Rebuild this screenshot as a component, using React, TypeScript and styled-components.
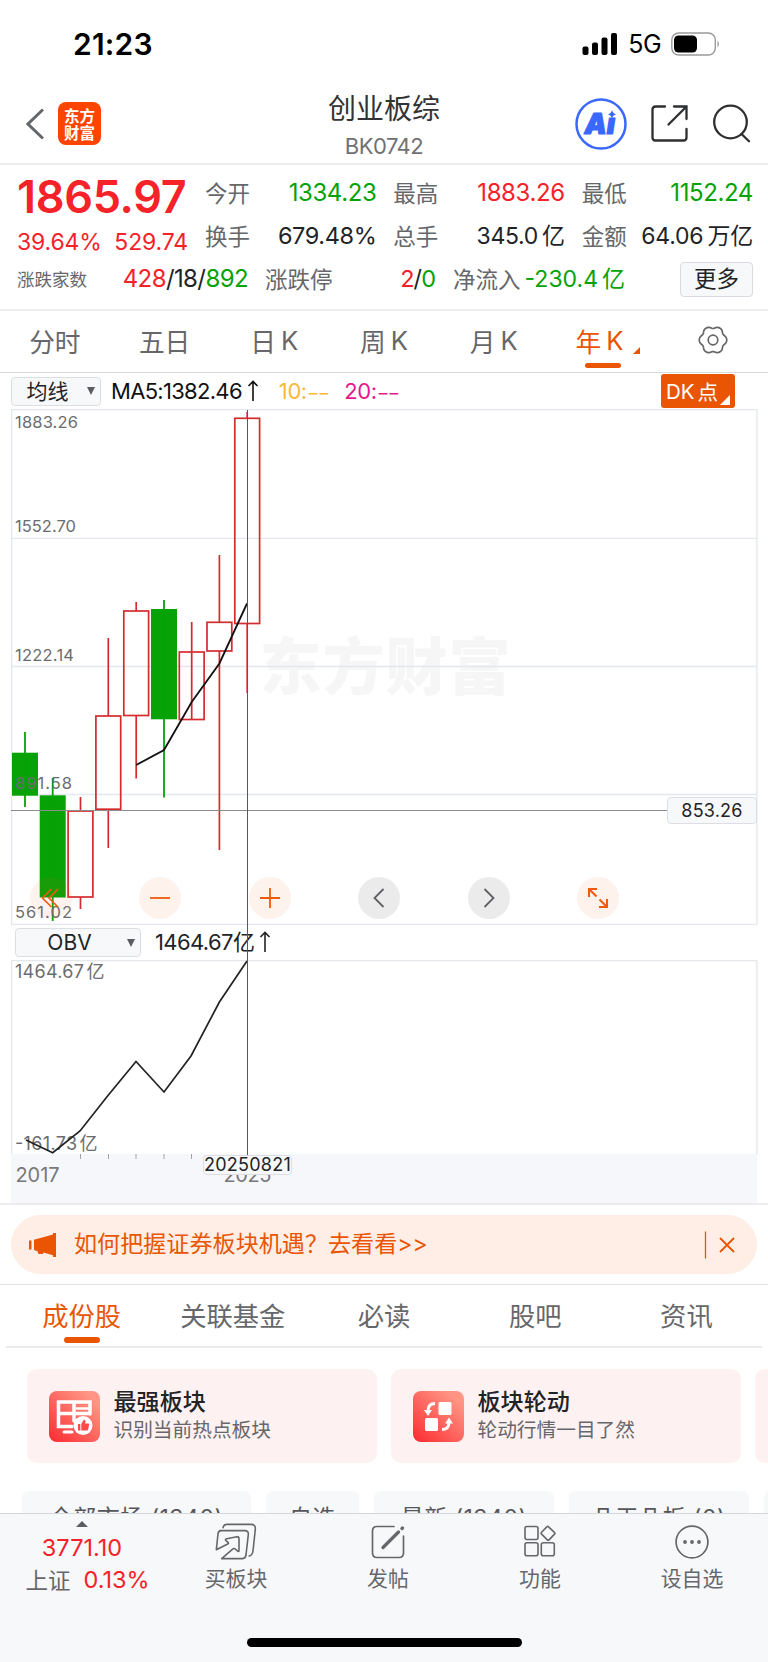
import React from "react";
import styled, { createGlobalStyle } from "styled-components";

const c = {
  red: "#f5222a",
  green: "#06a206",
  ink: "#222326",
  grey: "#66676a",
  orange: "#ea5504",
  line: "#e3e4e8",
  panel: "#f7f8fa",
};

const fontStack = `Inter, "Noto Sans CJK SC", sans-serif`;

const GlobalStyle = createGlobalStyle`
  * { box-sizing: border-box; }
  body { margin: 0; background: #fff; font-family: ${fontStack}; color: ${c.ink}; }
  svg { display: block; flex: none; }
`;

const Screen = styled.div`
  width: 768px;
  height: 1662px;
  display: flex;
  flex-direction: column;
  overflow: hidden;
  background: #fff;
`;

const Label = styled.span<{ $size?: number; $color?: string; $ls?: number; $weight?: number }>`
  font-size: ${(p) => p.$size ?? 22}px;
  color: ${(p) => p.$color ?? c.grey};
  letter-spacing: ${(p) => p.$ls ?? 0}px;
  font-weight: ${(p) => p.$weight ?? 400};
  line-height: 1.2;
  white-space: nowrap;
`;

const Unit = styled.span`
  margin-left: 4px;
`;

const Dashes = styled.span`
  font-size: 17.5px;
  letter-spacing: 2px;
  margin-left: 2px;
`;

/* status bar */
const StatusBar = styled.header`
  height: 84px;
  flex: none;
  display: flex;
  justify-content: space-between;
  align-items: center;
  padding: 4px 48px 0 73px;
`;
const StatusRight = styled.div`
  display: flex;
  align-items: center;
  gap: 10px;
`;

/* title bar */
const TitleBar = styled.div`
  height: 81px;
  flex: none;
  display: grid;
  grid-template-columns: 1fr auto 1fr;
  align-items: center;
  padding: 0 17px;
  border-bottom: 2px solid #ececee;
`;
const TitleLeft = styled.div`
  display: flex;
  align-items: center;
  gap: 14px;
  margin-left: 9px;
`;
const Logo = styled.div`
  width: 43px;
  height: 43px;
  border-radius: 8px;
  background: #ff4400;
  color: #fff;
  font: 700 15.5px/17px "Noto Sans CJK SC", sans-serif;
  display: flex;
  align-items: center;
  text-align: center;
  padding: 0 5px;
`;
const TitleText = styled.div`
  display: flex;
  flex-direction: column;
  align-items: center;
  gap: 7px;
  padding-top: 5px;
`;
const TitleRight = styled.div`
  display: flex;
  align-items: center;
  justify-content: flex-end;
  gap: 24px;
`;

/* quote panel */
const Quote = styled.section`
  height: 146px;
  flex: none;
  display: flex;
  flex-direction: column;
  border-bottom: 2px solid #eeeef0;
  padding: 6px 15px 0 17px;
`;
const QuoteTop = styled.div`
  height: 87px;
  flex: none;
  display: grid;
  grid-template-columns: 171px 1fr;
  column-gap: 17px;
`;
const PriceBlock = styled.div`
  display: flex;
  flex-direction: column;
`;
const Price = styled.div`
  height: 51px;
  flex: none;
  display: flex;
  align-items: center;
  font-size: 45px;
  font-weight: 600;
  letter-spacing: -0.3px;
  color: ${c.red};
`;
const Change = styled.div`
  height: 42px;
  flex: none;
  display: flex;
  justify-content: space-between;
  align-items: center;
`;
const Stats = styled.div`
  display: grid;
  grid-template-columns: repeat(3, 1fr);
  grid-auto-rows: 43px;
  column-gap: 17px;
  padding-top: 1px;
`;
const Stat = styled.div`
  display: flex;
  justify-content: space-between;
  align-items: center;
`;
const QuoteBottom = styled.div`
  height: 43px;
  flex: none;
  display: flex;
  align-items: center;
`;
const BottomCell = styled.div<{ $w: number; $gap?: number }>`
  width: ${(p) => p.$w}px;
  margin-right: ${(p) => p.$gap ?? 17}px;
  display: flex;
  justify-content: space-between;
  align-items: center;
`;
const MoreButton = styled.button`
  margin-left: auto;
  width: 73px;
  height: 35px;
  padding: 0;
  border: 1px solid #d9dbe2;
  border-radius: 4px;
  background: ${c.panel};
  font: 400 22.5px/1 ${fontStack};
  color: ${c.ink};
`;

/* period tabs */
const PeriodTabs = styled.nav`
  height: 62px;
  flex: none;
  display: grid;
  grid-template-columns: repeat(7, 1fr);
  border-bottom: 1px solid #d8dade;
`;
const PeriodTab = styled.div<{ $active?: boolean }>`
  position: relative;
  display: flex;
  align-items: center;
  justify-content: center;
  gap: 5px;
  padding: 0 ${(p) => (p.$active ? 8 : 0)}px 3px 0;
  font-size: 25.7px;
  color: ${(p) => (p.$active ? c.orange : c.grey)};
`;
const Underline = styled.i<{ $bottom: number }>`
  position: absolute;
  left: calc(50% - 18px);
  bottom: ${(p) => p.$bottom}px;
  width: 36px;
  height: 5.5px;
  border-radius: 3px;
  background: ${c.orange};
`;
const Corner = styled.i<{ $size: number; $color: string; $right: number; $bottom: number }>`
  position: absolute;
  right: ${(p) => p.$right}px;
  bottom: ${(p) => p.$bottom}px;
  border-left: ${(p) => p.$size}px solid transparent;
  border-bottom: ${(p) => p.$size}px solid ${(p) => p.$color};
`;

/* charts */
const ChartArea = styled.section`
  position: relative;
  height: 830px;
  flex: none;
  display: flex;
  flex-direction: column;
`;
const IndicatorBar = styled.div<{ $h: number; $pad: number }>`
  height: ${(p) => p.$h}px;
  flex: none;
  display: flex;
  align-items: center;
  padding: 0 33px 0 ${(p) => p.$pad}px;
`;
const Select = styled.div<{ $w: number }>`
  width: ${(p) => p.$w}px;
  height: 29px;
  display: flex;
  align-items: center;
  border: 1px solid #dcdee4;
  border-radius: 4px;
  background: ${c.panel};
  padding-right: 5px;
`;
const SelectText = styled.span`
  flex: 1;
  text-align: center;
  font-size: 21px;
  line-height: 1;
  padding-right: 4px;
`;
const Caret = styled.i`
  border: 4.5px solid transparent;
  border-top: 8px solid #5c5d60;
  border-bottom: 0;
`;
const MaValues = styled.div<{ $gap: number; $left: number }>`
  display: flex;
  align-items: center;
  gap: ${(p) => p.$gap}px;
  margin-left: ${(p) => p.$left}px;
`;
const DkButton = styled.div`
  position: relative;
  margin-left: auto;
  width: 74px;
  height: 34px;
  border-radius: 3px;
  background: ${c.orange};
  display: flex;
  align-items: center;
  gap: 3px;
  padding-left: 5px;
  color: #fff;
  font-size: 20.5px;
`;
const ChartFrame = styled.div<{ $h: number }>`
  position: relative;
  height: ${(p) => p.$h}px;
  flex: none;
  padding: 0 11px;
`;
const PriceTag = styled.div`
  position: absolute;
  right: 11px;
  top: 388px;
  width: 90px;
  height: 27px;
  border: 1px solid #dcdee3;
  border-radius: 4px;
  background: ${c.panel};
  display: flex;
  align-items: center;
  justify-content: center;
  font-size: 18px;
  letter-spacing: 0.2px;
`;
const Controls = styled.div`
  position: absolute;
  left: 30px;
  bottom: 6px;
  width: 589px;
  display: flex;
  justify-content: space-between;
`;
const RoundButton = styled.div<{ $grey?: boolean }>`
  width: 42px;
  height: 42px;
  border-radius: 50%;
  background: ${(p) => (p.$grey ? "rgba(60,60,60,.1)" : "rgba(245,90,20,.08)")};
  color: ${(p) => (p.$grey ? "#5f6063" : "#f05a0c")};
  display: flex;
  align-items: center;
  justify-content: center;
`;
const Crosshair = styled.i`
  position: absolute;
  left: 247px;
  top: 37px;
  width: 1px;
  height: 745px;
  background: #58585a;
`;
const Axis = styled.div`
  position: relative;
  height: 49px;
  margin: 0 11px;
  background: #f6f7fa;
`;
const DateTag = styled.div`
  position: absolute;
  left: 192px;
  top: 0.5px;
  width: 89px;
  height: 20px;
  border: 1px solid #dcdee3;
  border-radius: 4px;
  background: ${c.panel};
  display: flex;
  align-items: center;
  justify-content: center;
  font-size: 18px;
  letter-spacing: 0.25px;
`;

/* promo banner */
const BannerWrap = styled.div`
  height: 82px;
  flex: none;
  padding: 10px 11px 0;
  border-top: 2px solid #ececef;
  border-bottom: 1px solid #dfe0e4;
`;
const Banner = styled.div`
  height: 59px;
  border-radius: 30px;
  background: #feeee5;
  color: ${c.orange};
  display: flex;
  align-items: center;
  padding: 0 21px 0 18px;
`;
const BannerText = styled.span`
  flex: 1;
  margin-left: 18px;
  font-size: 23.1px;
  line-height: 1;
`;

/* section tabs */
const SectionTabs = styled.nav`
  height: 63px;
  flex: none;
  margin: 0 6px;
  display: flex;
  border-bottom: 2px solid #ebebed;
`;
const SectionTab = styled.div<{ $active?: boolean }>`
  flex: 1;
  position: relative;
  display: flex;
  align-items: center;
  justify-content: center;
  font-size: 26.3px;
  padding-bottom: 2px;
  color: ${(p) => (p.$active ? c.orange : c.grey)};
`;

/* feature cards */
const Cards = styled.div`
  height: 143px;
  flex: none;
  display: flex;
  gap: 14px;
  padding: 21px 0 0 27px;
  overflow: hidden;
`;
const Card = styled.div`
  width: 350px;
  height: 94px;
  flex: none;
  border-radius: 10px;
  background: #fef1f1;
  display: flex;
  align-items: center;
  gap: 14px;
  padding-left: 21.5px;
`;
const CardText = styled.div`
  display: flex;
  flex-direction: column;
  gap: 2px;
`;

/* filter chips */
const Chips = styled.div`
  height: 22px;
  flex: none;
  display: flex;
  gap: 15px;
  padding-left: 22px;
  overflow: hidden;
`;
const Chip = styled.div<{ $w: number }>`
  width: ${(p) => p.$w}px;
  height: 50px;
  flex: none;
  border-radius: 7px;
  background: ${c.panel};
  display: flex;
  align-items: center;
  justify-content: center;
  font-size: 23px;
  letter-spacing: 0.5px;
  color: #55565a;
`;

/* bottom navigation */
const BottomBar = styled.footer`
  flex: 1;
  display: flex;
  flex-direction: column;
  align-items: center;
  background: ${c.panel};
  border-top: 1px solid #d5d7db;
`;
const NavRow = styled.div`
  width: 100%;
  height: 124px;
  display: flex;
  padding-left: 4px;
`;
const NavItem = styled.div<{ $w?: number }>`
  flex: ${(p) => (p.$w ? `0 0 ${p.$w}px` : "1")};
  display: flex;
  flex-direction: column;
  align-items: center;
  padding-top: 7px;
`;
const NavIcon = styled.div`
  height: 41px;
  display: flex;
  align-items: center;
  margin-bottom: 4px;
`;
const UpCaret = styled.i`
  border: 6px solid transparent;
  border-bottom: 6px solid #5c5d60;
  border-top: 0;
`;
const IndexLine = styled.div<{ $top: number; $left?: number }>`
  display: flex;
  align-items: center;
  gap: 13px;
  margin-top: ${(p) => p.$top}px;
  padding-left: ${(p) => p.$left ?? 0}px;
`;
const HomeIndicator = styled.div`
  width: 275px;
  height: 9px;
  border-radius: 5px;
  background: #000;
`;

const gearPath = (() => {
  const pts: string[] = [];
  for (let a = 0; a < 360; a += 5) {
    const t = (a * Math.PI) / 180;
    const r = 12.8 + 1.1 * Math.cos(6 * t) - 0.2 * Math.cos(12 * t);
    pts.push(`${(15 + r * Math.cos(t)).toFixed(2)} ${(15 + r * Math.sin(t)).toFixed(2)}`);
  }
  return `M${pts.join("L")}Z`;
})();

const UpArrow = ({ color }: { color: string }) => (
  <svg width="12" height="22" viewBox="0 0 12 22" fill="none" stroke={color} strokeWidth="1.6">
    <path d="M6 1.5V21M1.5 6L6 1.5L10.500 6" />
  </svg>
);

type Candle = { x: number; top: number; bottom: number; high: number; low: number; up?: boolean };
const candles: Candle[] = [
  { x: 25, top: 752.7, bottom: 795.7, high: 732, low: 807 },
  { x: 52.7, top: 795.3, bottom: 897.5, high: 778, low: 921 },
  { x: 80.5, top: 811, bottom: 897, high: 797, low: 909, up: true },
  { x: 108.3, top: 716, bottom: 809.2, high: 638, low: 848, up: true },
  { x: 136.2, top: 611, bottom: 715.5, high: 602, low: 778.5, up: true },
  { x: 164, top: 609, bottom: 719.3, high: 600, low: 797.5 },
  { x: 191.7, top: 652, bottom: 719.5, high: 622, low: 652, up: true },
  { x: 219.4, top: 622.3, bottom: 651, high: 555, low: 850, up: true },
  { x: 247.2, top: 418.3, bottom: 623.5, high: 412, low: 693, up: true },
];
const levels: [string, number, number][] = [
  ["1883.26", 422.3, 63],
  ["1552.70", 525.7, 61],
  ["1222.14", 654.7, 59],
  ["891.58", 783, 57],
  ["561.02", 911.6, 57],
];

const KChart = () => (
  <svg width="747" height="516" viewBox="11 409 747 516">
    <text x="259.500" y="690" fontSize="62" fontWeight="900" fill="#f6f6f6" textLength="251"
      fontFamily='"Noto Sans CJK SC", sans-serif'>东方财富</text>
    <g stroke="#e4e6f0" strokeWidth="1.3" fill="none">
      <rect x="11.6" y="409.600" width="745.300" height="514.800" />
      <path d="M11 538.300H757M11 666.500H757M11 794.500H757" />
    </g>
    {candles.map((k) =>
      k.up ? (
        <g key={k.x} stroke="#d52b2e" strokeWidth="1.7" fill="none">
          <rect x={k.x - 12.400} y={k.top} width="24.800" height={k.bottom - k.top} />
          <path d={`M${k.x} ${k.high}V${k.top}M${k.x} ${k.bottom}V${k.low}`} />
        </g>
      ) : (
        <g key={k.x} fill="#06a206">
          <rect x={k.x - 13} y={k.top} width="26" height={k.bottom - k.top} />
          <rect x={k.x - 0.9} y={k.high} width="1.800" height={k.low - k.high} />
        </g>
      )
    )}
    <polyline points="136.200,765 164,750 191.700,702 219.400,663.500 247,603.500" fill="none" stroke="#111" strokeWidth="1.800" />
    <path d="M11 810.500H757" stroke="#8c8c8e" strokeWidth="1" />
    {levels.map(([t, y, w]) => (
      <text key={t} x="15" y={y + 6} fontSize="16.500" fill="#6b6c6f" textLength={w}>{t}</text>
    ))}
  </svg>
);

const ObvChart = () => (
  <svg width="747" height="195" viewBox="11 959 747 195">
    <path d="M11.600 1154V959.600H756.900V1154" fill="none" stroke="#e4e6ea" strokeWidth="1.300" />
    <g fontSize="18" fill="#6b6c6f">
      <text x="15" y="977" textLength="69">1464.67</text>
      <text x="86.500" y="977">亿</text>
      <text x="15" y="1149" textLength="62">-161.73</text>
      <text x="79.500" y="1149">亿</text>
    </g>
    <polyline
      points="26,1139 52.700,1151.700 80,1130 108,1094.500 136,1060.500 164,1091 191,1055 219.400,1001 247,960"
      fill="none" stroke="#222" strokeWidth="1.700" />
  </svg>
);

const GridIcon = () => (
  <svg width="32" height="33" viewBox="0 0 32 33" fill="none" stroke={c.grey} strokeWidth="1.6">
    <rect x="1" y="1.500" width="13" height="13" rx="2" />
    <rect x="1" y="17.800" width="13" height="13" rx="2" />
    <rect x="17.300" y="17.800" width="13" height="13" rx="2" />
    <path d="M24.300 1.700L30.400 7.300Q31.300 8.200 30.500 9.100L25.100 14.800Q24.200 15.600 23.300 14.800L17.600 9.100Q16.700 8.200 17.600 7.300L23 1.700Q23.700 1.100 24.300 1.700Z" />
  </svg>
);

const App = () => (
  <Screen>
    <GlobalStyle />
    <StatusBar>
      <Label $size={30} $color="#000" $weight={600} $ls={0.2}>21:23</Label>
      <StatusRight>
        <svg width="36" height="24" viewBox="0 0 36 24">
          <rect x="0.500" y="14.500" width="6" height="8.500" rx="2" />
          <rect x="10" y="10.500" width="6" height="12.500" rx="2" />
          <rect x="19.500" y="5.500" width="6" height="17.500" rx="2" />
          <rect x="29" y="1" width="6" height="22" rx="2" />
        </svg>
        <Label $size={25} $color="#000" $ls={-0.6}>5G</Label>
        <svg width="49" height="24" viewBox="0 0 49 24">
          <rect x="0.800" y="1" width="43.500" height="22" rx="7" fill="none" stroke="#9a9a9a" strokeWidth="1.400" />
          <rect x="3" y="3.500" width="23" height="17" rx="4.500" />
          <path d="M46.500 8.500q3 3.500 0 7z" fill="#9a9a9a" />
        </svg>
      </StatusRight>
    </StatusBar>

    <TitleBar>
      <TitleLeft>
        <svg width="18" height="32" viewBox="0 0 18 32" fill="none" stroke="#66676a" strokeWidth="3">
          <path d="M17 1.500L2 16L17 30.500" />
        </svg>
        <Logo>东方财富</Logo>
      </TitleLeft>
      <TitleText>
        <Label $size={28} $color="#333">创业板综</Label>
        <Label $size={22} $color="#707174" $ls={-0.5}>BK0742</Label>
      </TitleText>
      <TitleRight>
        <svg width="52" height="52" viewBox="0 0 52 52">
          <circle cx="26" cy="26" r="24.500" fill="none" stroke="#3a68ff" strokeWidth="2.500" />
          <text x="9.500" y="35.500" fontSize="28" fontWeight="900" fontStyle="italic" fill="#3a68ff" stroke="#3a68ff" strokeWidth="1.200" strokeLinejoin="round">Aı</text>
          <path d="M37 12q.8 3.400 4 4.200q-3.200.8-4 4q-.8-3.200-4-4q3.200-.8 4-4.200z" fill="#3a68ff" />
        </svg>
        <svg width="37" height="37" viewBox="0 0 37 37" fill="none" stroke="#2e2f31" strokeWidth="2.300" strokeLinecap="round">
          <path d="M14 1.500H4.500Q1.500 1.500 1.500 4.500V32.500Q1.500 35.500 4.500 35.500H32.500Q35.500 35.500 35.500 32.500V24M23 1.500H35.500V14M35 2L17.500 19.500" />
        </svg>
        <svg width="39" height="39" viewBox="0 0 39 39" fill="none" stroke="#2e2f31" strokeWidth="2.300" strokeLinecap="round">
          <circle cx="18.500" cy="18" r="16.300" />
          <path d="M29.500 30L37 37.300" />
        </svg>
      </TitleRight>
    </TitleBar>

    <Quote>
      <QuoteTop>
        <PriceBlock>
          <Price>1865.97</Price>
          <Change>
            <Label $color={c.red} $size={23} $ls={-0.15}>39.64%</Label>
            <Label $color={c.red} $size={23} $ls={-0.15}>529.74</Label>
          </Change>
        </PriceBlock>
        <Stats>
          <Stat><Label $size={22.5}>今开</Label><Label $size={24} $color={c.green} $ls={-0.4}>1334.23</Label></Stat>
          <Stat><Label $size={22.5}>最高</Label><Label $size={24} $color={c.red} $ls={-0.4}>1883.26</Label></Stat>
          <Stat><Label $size={22.5}>最低</Label><Label $size={24} $color={c.green} $ls={-0.4}>1152.24</Label></Stat>
          <Stat><Label $size={22.5}>换手</Label><Label $size={23.5} $color={c.ink} $ls={-0.4}>679.48%</Label></Stat>
          <Stat><Label $size={22.5}>总手</Label><Label $size={23} $color={c.ink} $ls={-0.3}>345.0<Unit>亿</Unit></Label></Stat>
          <Stat><Label $size={22.5}>金额</Label><Label $size={23} $color={c.ink} $ls={-0.2}>64.06<Unit>万亿</Unit></Label></Stat>
        </Stats>
      </QuoteTop>
      <QuoteBottom>
        <BottomCell $w={231}>
          <Label $size={17.5}>涨跌家数</Label>
          <Label $size={24} $color={c.ink} $ls={-0.6}>
            <Label $size={24} $color={c.red} $ls={-0.6}>428</Label>/18/<Label $size={24} $color={c.green} $ls={-0.6}>892</Label>
          </Label>
        </BottomCell>
        <BottomCell $w={171}>
          <Label $size={22.500}>涨跌停</Label>
          <Label $size={23.5} $color={c.ink} $ls={-0.9}>
            <Label $size={23.5} $color={c.red} $ls={-0.9}>2</Label>/<Label $size={23.5} $color={c.green}>0</Label>
          </Label>
        </BottomCell>
        <BottomCell $w={172}>
          <Label $size={22.500}>净流入</Label>
          <Label $size={23} $color={c.green}>-230.4<Unit>亿</Unit></Label>
        </BottomCell>
        <MoreButton>更多</MoreButton>
      </QuoteBottom>
    </Quote>

    <PeriodTabs>
      <PeriodTab>分时</PeriodTab>
      <PeriodTab>五日</PeriodTab>
      <PeriodTab>日<span>K</span></PeriodTab>
      <PeriodTab>周<span>K</span></PeriodTab>
      <PeriodTab>月<span>K</span></PeriodTab>
      <PeriodTab $active>
        年<span>K</span>
        <Underline $bottom={4} />
        <Corner $size={7.5} $color={c.orange} $right={18} $bottom={18} />
      </PeriodTab>
      <PeriodTab>
        <svg width="30" height="30" viewBox="0 0 30 30" fill="none" stroke={c.grey} strokeWidth="1.700" strokeLinejoin="round">
          <path d={gearPath} />
          <circle cx="15" cy="15" r="4.800" />
        </svg>
      </PeriodTab>
    </PeriodTabs>

    <ChartArea>
      <IndicatorBar $h={36} $pad={11}>
        <Select $w={90}><SelectText>均线</SelectText><Caret /></Select>
        <MaValues $gap={16} $left={10}>
          <MaValues $gap={5} $left={0}>
            <Label $color="#111" $ls={-0.7}>MA5:1382.46</Label>
            <UpArrow color="#111" />
          </MaValues>
          <MaValues $gap={14} $left={4}>
            <Label $color="#f9b937" $ls={-0.4}>10:<Dashes>––</Dashes></Label>
            <Label $color="#e6188c" $ls={-0.4}>20:<Dashes>––</Dashes></Label>
          </MaValues>
        </MaValues>
        <DkButton>DK<span>点</span><Corner $size={10} $color="#fff" $right={5} $bottom={3} /></DkButton>
      </IndicatorBar>
      <ChartFrame $h={516}>
        <KChart />
        <PriceTag>853.26</PriceTag>
        <Controls>
          <RoundButton>
            <svg width="18" height="20" viewBox="0 0 18 20" fill="none" stroke="currentColor" strokeWidth="1.600">
              <path d="M9.500 1L0.500 10L9.500 19M16 1L7 10L16 19" />
            </svg>
          </RoundButton>
          <RoundButton>
            <svg width="20" height="20" viewBox="0 0 20 20" stroke="currentColor" strokeWidth="1.800"><path d="M0 10H20" /></svg>
          </RoundButton>
          <RoundButton>
            <svg width="20" height="20" viewBox="0 0 20 20" stroke="currentColor" strokeWidth="1.800"><path d="M0 10H20M10 0V20" /></svg>
          </RoundButton>
          <RoundButton $grey>
            <svg width="12" height="20" viewBox="0 0 12 20" fill="none" stroke="currentColor" strokeWidth="1.800"><path d="M10.500 1L1.500 10L10.500 19" /></svg>
          </RoundButton>
          <RoundButton $grey>
            <svg width="12" height="20" viewBox="0 0 12 20" fill="none" stroke="currentColor" strokeWidth="1.800"><path d="M1.500 1L10.500 10L1.500 19" /></svg>
          </RoundButton>
          <RoundButton>
            <svg width="20" height="20" viewBox="0 0 20 20" fill="none" stroke="currentColor" strokeWidth="2">
              <path d="M1 9V1H9M1 1L8.500 8.500M19 11V19H11M19 19L11.500 11.500" />
            </svg>
          </RoundButton>
        </Controls>
      </ChartFrame>
      <IndicatorBar $h={35} $pad={15}>
        <Select $w={126}><SelectText>OBV</SelectText><Caret /></Select>
        <MaValues $gap={5} $left={14}>
          <Label $color={c.ink} $ls={-0.6}>1464.67亿</Label>
          <UpArrow color={c.ink} />
        </MaValues>
      </IndicatorBar>
      <ChartFrame $h={194}><ObvChart /></ChartFrame>
      <Axis>
        <svg width="746" height="49" viewBox="11 1154 746 49">
          <path d="M80.500 1154v5M108.500 1154v5M136 1154v5M164 1154v5M191.500 1154v5" stroke="#a2a3a6" strokeWidth="1" />
          <g fontSize="20" fill="#77787b">
            <text x="15.500" y="1182" textLength="44">2017</text>
            <text x="223.500" y="1182" textLength="48">2025</text>
          </g>
        </svg>
        <DateTag>20250821</DateTag>
      </Axis>
      <Crosshair />
    </ChartArea>

    <BannerWrap>
      <Banner>
        <svg width="27" height="24" viewBox="0 0 27 24" fill={c.orange}>
          <path d="M0 7.500h2.500v9H0zM5 6.700L24 1.500V0H27V24H24V22.300L14.500 19.500L14 21H9.500L8.500 18.300L5 17z" />
        </svg>
        <BannerText>如何把握证券板块机遇？去看看&gt;&gt;</BannerText>
        <svg width="32" height="28" viewBox="0 0 32 28" fill="none" stroke={c.orange}>
          <path d="M1.500 0.500V27.500" strokeWidth="1.300" />
          <path d="M16 7L30 21M30 7L16 21" strokeWidth="1.800" />
        </svg>
      </Banner>
    </BannerWrap>

    <SectionTabs>
      <SectionTab $active>成份股<Underline $bottom={3.5} /></SectionTab>
      <SectionTab>关联基金</SectionTab>
      <SectionTab>必读</SectionTab>
      <SectionTab>股吧</SectionTab>
      <SectionTab>资讯</SectionTab>
    </SectionTabs>

    <Cards>
      <Card>
        <svg width="51" height="51" viewBox="0 0 51 51">
          <defs>
            <linearGradient id="tile" x1="0" y1="1" x2="0.800" y2="0.100">
              <stop offset="0" stopColor="#fb2a30" />
              <stop offset="1" stopColor="#ff9584" />
            </linearGradient>
          </defs>
          <rect width="51" height="51" rx="8" fill="url(#tile)" />
          <path fill="none" stroke="#fff" strokeWidth="3.500" strokeLinecap="round" d="M41 23V11H9.500V35.500H23M25 11V30M9.500 22.500H41M25 30H29" />
          <path stroke="#fff" strokeWidth="3" strokeLinecap="round" d="M15 41H23" />
          <path stroke="#fff" strokeWidth="2.500" d="M27 17.500H40" />
          <circle cx="34" cy="34.500" r="9.500" fill="#fff" />
          <path d="M29 33h2.300v6.500H29zM32.300 33l2.600-4.500q2 .2 1.500 2.500l-.3 1.500h3.200q1 .2.800 1.200l-1 4.800q-.3 1-1.200 1h-5.600z" fill="#fb4a48" />
        </svg>
        <CardText>
          <Label $size={23.1} $color={c.ink} $weight={500}>最强板块</Label>
          <Label $size={19.700}>识别当前热点板块</Label>
        </CardText>
      </Card>
      <Card>
        <svg width="51" height="51" viewBox="0 0 51 51">
          <rect width="51" height="51" rx="8" fill="url(#tile)" />
          <rect x="25.500" y="11" width="13" height="13" rx="1.500" fill="#fff" />
          <rect x="12" y="27" width="13" height="13" rx="1.500" fill="#fff" />
          <path d="M22 12.500Q15 12.500 15 20M29 38.500Q36 38.500 36 31" fill="none" stroke="#fff" strokeWidth="3" />
          <path d="M11 19H19L15 25zM32 32.500H40L36 26.500z" fill="#fff" />
        </svg>
        <CardText>
          <Label $size={23.1} $color={c.ink} $weight={500}>板块轮动</Label>
          <Label $size={19.700}>轮动行情一目了然</Label>
        </CardText>
      </Card>
      <Card />
    </Cards>

    <Chips>
      <Chip $w={229}>全部市场 (1340)</Chip>
      <Chip $w={93}>自选</Chip>
      <Chip $w={180}>最新 (1340)</Chip>
      <Chip $w={180}>几天几板 (0)</Chip>
      <Chip $w={180} />
    </Chips>

    <BottomBar>
      <NavRow>
        <NavItem $w={156}>
          <UpCaret />
          <IndexLine $top={7}><Label $color={c.red} $size={23.5}>3771.10</Label></IndexLine>
          <IndexLine $top={4} $left={11}>
            <Label $size={22.5}>上证</Label>
            <Label $color={c.red} $size={23.500}>0.13%</Label>
          </IndexLine>
        </NavItem>
        <NavItem>
          <NavIcon>
            <svg width="42" height="38" viewBox="0 0 126 114" fill="none" stroke={c.grey} strokeWidth="4.800" strokeLinejoin="round" strokeLinecap="round">
              <path d="M24 14Q26 4 36 4H108Q122 4 121 18L114 84Q112 98 102 99" />
              <path d="M14 23H89Q101 23 100 34L93 96Q91 107 81 107H20L52 79Q57 74 62 79L69 85Q72 87 72 82V47Q72 41 66 41L35 47Q29 49 33 53L39 58Q42 61 38 63L4 80L9 33Q10 23 18 23" />
            </svg>
          </NavIcon>
          <Label $size={20.900}>买板块</Label>
        </NavItem>
        <NavItem>
          <NavIcon>
            <svg width="34" height="34" viewBox="0 0 34 34" fill="none" stroke={c.grey} strokeWidth="1.700" strokeLinecap="round">
              <path d="M23 1.500H6Q1.500 1.500 1.500 6V28Q1.500 32.500 6 32.500H28Q32.500 32.500 32.500 28V11" />
              <path d="M12 22.500L27.500 7M31 3.500L31.500 3" strokeWidth="3.300" />
            </svg>
          </NavIcon>
          <Label $size={20.900}>发帖</Label>
        </NavItem>
        <NavItem>
          <NavIcon><GridIcon /></NavIcon>
          <Label $size={20.900}>功能</Label>
        </NavItem>
        <NavItem>
          <NavIcon>
            <svg width="34" height="34" viewBox="0 0 34 34" fill={c.grey}>
              <circle cx="17" cy="17" r="15.900" fill="none" stroke={c.grey} strokeWidth="1.700" />
              <circle cx="10" cy="17" r="1.900" /><circle cx="17" cy="17" r="1.900" /><circle cx="24" cy="17" r="1.900" />
            </svg>
          </NavIcon>
          <Label $size={20.900}>设自选</Label>
        </NavItem>
      </NavRow>
      <HomeIndicator />
    </BottomBar>
  </Screen>
);

export default App;
